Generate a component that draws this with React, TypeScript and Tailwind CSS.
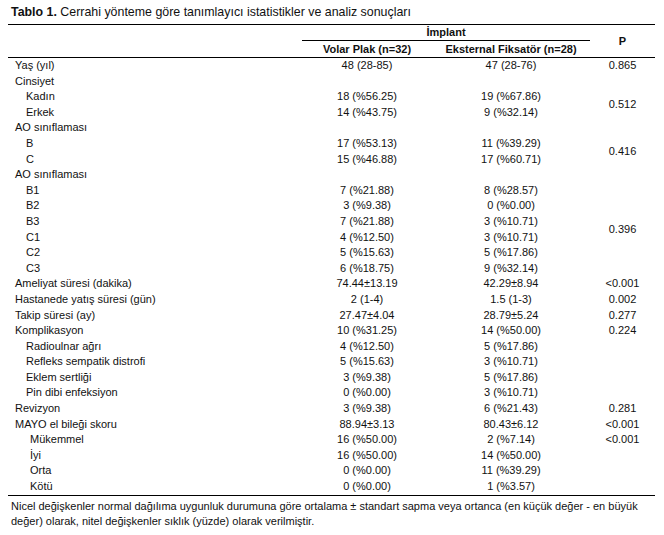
import React from "react";

type Row = {
  label: string;
  level?: 0 | 1 | 2;
  a?: string;
  b?: string;
  p?: string;
  span?: number;
  skipP?: boolean;
};

const rows: Row[] = [
  { label: "Yaş (yıl)", a: "48 (28-85)", b: "47 (28-76)", p: "0.865" },
  { label: "Cinsiyet" },
  { label: "Kadın", level: 1, a: "18 (%56.25)", b: "19 (%67.86)", p: "0.512", span: 2 },
  { label: "Erkek", level: 1, a: "14 (%43.75)", b: "9 (%32.14)", skipP: true },
  { label: "AO sınıflaması" },
  { label: "B", level: 1, a: "17 (%53.13)", b: "11 (%39.29)", p: "0.416", span: 2 },
  { label: "C", level: 1, a: "15 (%46.88)", b: "17 (%60.71)", skipP: true },
  { label: "AO sınıflaması" },
  { label: "B1", level: 1, a: "7 (%21.88)", b: "8 (%28.57)", p: "0.396", span: 6 },
  { label: "B2", level: 1, a: "3 (%9.38)", b: "0 (%0.00)", skipP: true },
  { label: "B3", level: 1, a: "7 (%21.88)", b: "3 (%10.71)", skipP: true },
  { label: "C1", level: 1, a: "4 (%12.50)", b: "3 (%10.71)", skipP: true },
  { label: "C2", level: 1, a: "5 (%15.63)", b: "5 (%17.86)", skipP: true },
  { label: "C3", level: 1, a: "6 (%18.75)", b: "9 (%32.14)", skipP: true },
  { label: "Ameliyat süresi (dakika)", a: "74.44±13.19", b: "42.29±8.94", p: "<0.001" },
  { label: "Hastanede yatış süresi (gün)", a: "2 (1-4)", b: "1.5 (1-3)", p: "0.002" },
  { label: "Takip süresi (ay)", a: "27.47±4.04", b: "28.79±5.24", p: "0.277" },
  { label: "Komplikasyon", a: "10 (%31.25)", b: "14 (%50.00)", p: "0.224" },
  { label: "Radioulnar ağrı", level: 1, a: "4 (%12.50)", b: "5 (%17.86)" },
  { label: "Refleks sempatik distrofi", level: 1, a: "5 (%15.63)", b: "3 (%10.71)" },
  { label: "Eklem sertliği", level: 1, a: "3 (%9.38)", b: "5 (%17.86)" },
  { label: "Pin dibi enfeksiyon", level: 1, a: "0 (%0.00)", b: "3 (%10.71)" },
  { label: "Revizyon", a: "3 (%9.38)", b: "6 (%21.43)", p: "0.281" },
  { label: "MAYO el bileği skoru", a: "88.94±3.13", b: "80.43±6.12", p: "<0.001" },
  { label: "Mükemmel", level: 2, a: "16 (%50.00)", b: "2 (%7.14)", p: "<0.001" },
  { label: "İyi", level: 2, a: "16 (%50.00)", b: "14 (%50.00)" },
  { label: "Orta", level: 2, a: "0 (%0.00)", b: "11 (%39.29)" },
  { label: "Kötü", level: 2, a: "0 (%0.00)", b: "1 (%3.57)" },
];

const indent = ["pl-[7px]", "pl-[18px]", "pl-[22px]"];

export default function App() {
  return (
    <div className="w-[664px] h-[535px] bg-white text-[#111] font-['Liberation_Sans',Arial,sans-serif] pl-[8px] pr-[9px]">
      <div className="pl-[3px] pt-[4px] h-[24px] text-[12.4px] leading-[16px]">
        <span className="font-bold">Tablo 1.</span> Cerrahi yönteme göre tanımlayıcı istatistikler ve analiz sonuçları
      </div>
      <table className="w-[647px] table-fixed border-collapse text-[11px]">
        <colgroup>
          <col className="w-[294px]" />
          <col className="w-[130px]" />
          <col className="w-[158px]" />
          <col className="w-[65px]" />
        </colgroup>
        <thead>
          <tr className="h-[16px] border-t border-black">
            <th rowSpan={2} className="border-b border-black p-0" />
            <th colSpan={2} className="p-0 font-bold text-center leading-[15px] border-b border-black">
              İmplant
            </th>
            <th rowSpan={2} className="p-0 font-bold text-center border-b border-black">
              P
            </th>
          </tr>
          <tr className="h-[17px]">
            <th className="p-0 font-bold text-center leading-[16px] border-b border-black">Volar Plak (n=32)</th>
            <th className="p-0 font-bold text-center leading-[16px] border-b border-black">Eksternal Fiksatör (n=28)</th>
          </tr>
        </thead>
        <tbody className="border-b border-black">
          {rows.map((r, i) => (
            <tr key={i} className="h-[15.6px]">
              <td className={`p-0 leading-[15.6px] ${indent[r.level ?? 0]}`}>{r.label}</td>
              <td className="p-0 text-center leading-[15.6px]">{r.a ?? ""}</td>
              <td className="p-0 text-center leading-[15.6px]">{r.b ?? ""}</td>
              {!r.skipP && (
                <td rowSpan={r.span ?? 1} className="p-0 text-center align-middle leading-[15.6px]">
                  {r.p ?? ""}
                </td>
              )}
            </tr>
          ))}
        </tbody>
      </table>
      <p className="mt-[3px] pl-[3px] text-[11px] leading-[15px]">
        Nicel değişkenler normal dağılıma uygunluk durumuna göre ortalama ± standart sapma veya ortanca (en küçük değer - en büyük
        <br />
        değer) olarak, nitel değişkenler sıklık (yüzde) olarak verilmiştir.
      </p>
    </div>
  );
}
